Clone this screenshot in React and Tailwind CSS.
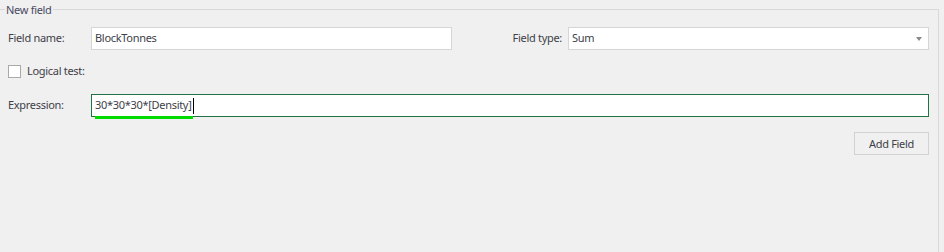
import React from "react";

export default function App() {
  return (
    <div className="w-[944px] h-[252px] bg-[#f0f0f0] overflow-hidden text-[11px] tracking-[-0.3px] text-[#404048]" style={{ fontFamily: '"Noto Sans", "Open Sans", sans-serif' }}>
      <div className="relative mt-[9px] w-[939px] h-[243px] border-t border-r border-[#d9d9d9] pl-[8px] pr-[9px] pt-[17px]">
        <span className="absolute left-[5px] -top-[9px] bg-[#f0f0f0] px-[1px] leading-[17px] text-[11px] text-[#4a4a62]">New field</span>

        <div className="flex items-center h-[23px]">
          <span className="w-[83px]">Field name:</span>
          <div className="w-[361px] h-[23px] bg-white border border-[#d6d6d6] flex items-center pl-[3px]">BlockTonnes</div>
          <span className="flex-1 text-right pr-[6px]">Field type:</span>
          <div className="w-[361px] h-[23px] bg-white border border-[#d6d6d6] flex items-center pl-[3px] pr-[6px]">
            <span className="flex-1">Sum</span>
            <span className="w-0 h-0 border-l-[3px] border-r-[3px] border-t-[4px] border-l-transparent border-r-transparent border-t-[#8a8a8a]"></span>
          </div>
        </div>

        <div className="flex items-center h-[23px] mt-[10px]">
          <span className="w-[13px] h-[13px] bg-white border border-[#a9a9a9]"></span>
          <span className="ml-[6px]">Logical test:</span>
        </div>

        <div className="flex items-center h-[23px] mt-[11px]">
          <span className="w-[83px]">Expression:</span>
          <div className="relative flex-1 h-[23px] bg-white border border-[#217346] flex items-center pl-[3px]">
            <span>30*30*30*[Density]</span>
            <span className="w-[1px] h-[16px] bg-black ml-[1px]"></span>
            <span className="absolute left-[3px] top-full w-[98px] h-[3px] bg-[#00dc00]"></span>
          </div>
        </div>

        <div className="flex justify-end mt-[15px]">
          <button className="w-[75px] h-[23px] bg-[#f0f0f0] border border-[#d2d2d2] text-[#404048] text-[11px] tracking-[-0.3px] leading-none">Add Field</button>
        </div>
      </div>
    </div>
  );
}
